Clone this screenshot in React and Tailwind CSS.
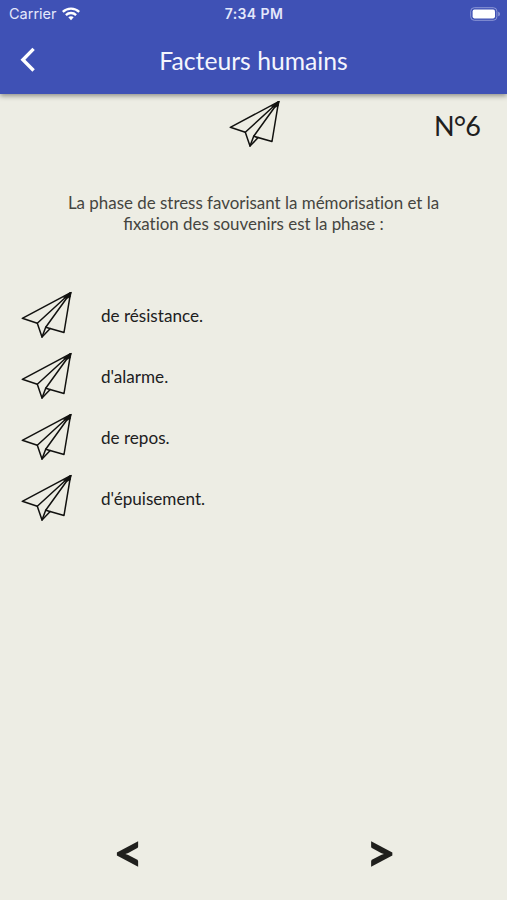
import React from 'react';

const question = {
    category: 'Facteurs humains',
    number: 6,
    text: 'La phase de stress favorisant la mémorisation et la fixation des souvenirs est la phase :',
    answers: ['de résistance.', "d'alarme.", 'de repos.', "d'épuisement."],
};

const PaperPlane = () => (
    <svg width="51" height="48" viewBox="0 0 51 48" fill="none" stroke="#11110f" strokeWidth="1.5" strokeLinejoin="round" strokeLinecap="round">
        <path d="M49.6 1.7 1.3 27.3 16.3 32.3 21 46 29.2 37.6" />
        <path d="M49.6 1.7 16.3 32.3" />
        <path d="M49.6 1.7 24.7 36.3 21 46" />
        <path d="M49.6 1.7 43 41.5 24.7 36.3" />
        <path d="M49.8 1.5 42.5 6.2 45.5 7.4 48.9 6.2Z" fill="#11110f" strokeWidth="0.8" />
    </svg>
);

const WifiIcon = () => (
    <svg width="18" height="14" viewBox="0 0 18 14" fill="none" stroke="#fff" strokeWidth="2.3">
        <path d="M0.8 4.9C5.3 0.5 12.7 0.5 17.2 4.9" />
        <path d="M3.9 8.1C6.7 5.3 11.3 5.3 14.1 8.1" />
        <path d="M6.3 10.3C7.8 8.9 10.2 8.9 11.7 10.3L9 13.2Z" fill="#fff" stroke="none" />
    </svg>
);

const BatteryIcon = () => (
    <svg width="31" height="14" viewBox="0 0 31 14">
        <rect x="0.7" y="0.7" width="26.2" height="12.6" rx="3.6" fill="none" stroke="#8c97d6" strokeWidth="1" />
        <rect x="2.6" y="2.6" width="22.4" height="8.8" rx="1.8" fill="#fff" />
        <path d="M28.2 4.7C30.6 5.4 30.6 8.6 28.2 9.3Z" fill="#8c97d6" />
    </svg>
);

const StatusBar = () => (
    <div className="grid h-[27px] grid-cols-3 items-center pl-[7px] pr-[6px] font-['Inter',sans-serif] text-[14px] text-[#e4e8fb]">
        <div className="flex items-center gap-[5px] pl-[2px]">
            <span className="text-[14.5px]">Carrier</span>
            <WifiIcon />
        </div>
        <span className="text-center font-semibold tracking-[0.4px]">7:34 PM</span>
        <div className="flex justify-end"><BatteryIcon /></div>
    </div>
);

// Only the "fi" pair is drawn as a ligature
const QuestionText = ({ text }) => (
    <p className="mx-auto mt-[44px] w-[400px] text-center text-[16.93px] leading-[21px] text-[#45453f] [font-variant-ligatures:none]">
        {text.split(/(fi)/).map((part, i) => (
            part === 'fi' ? <span key={i} className="[font-variant-ligatures:normal]">{part}</span> : part
        ))}
    </p>
);

const App = () => {
    return (
        <div className="flex h-[900px] w-[507px] flex-col overflow-hidden bg-[#edede4] font-['Lato',sans-serif] text-[#20201d]">
            <header className="h-[94px] shrink-0 bg-[#3f51b5] shadow-[0_2px_5px_rgba(0,0,0,0.4)]">
                <StatusBar />
                <div className="grid h-[66px] grid-cols-[60px_1fr_60px] items-center">
                    <button className="pl-[20px]" aria-label="Retour">
                        <svg width="16" height="26" viewBox="0 0 16 26" fill="none" stroke="#fff" strokeWidth="3.4">
                            <path d="M13.6 1.9 2.9 12.7 13.6 23.5" />
                        </svg>
                    </button>
                    <h1 className="pt-[2px] text-center text-[24.7px] text-[#f4f5fd]">{question.category}</h1>
                </div>
            </header>

            <main className="flex flex-1 flex-col">
                <div className="grid grid-cols-3 pt-[6px]">
                    <div className="col-start-2 flex justify-center pl-px"><PaperPlane /></div>
                    <span className="pr-[27px] pt-[8px] text-right text-[27px] leading-[36px] tracking-[-0.9px]">
                        N<span className="align-[-3px] text-[30px] leading-none">°</span>{question.number}
                    </span>
                </div>

                <QuestionText text={question.text} />

                <ul className="mt-[51px]">
                    {question.answers.map((answer) => (
                        <li key={answer} className="flex h-[61px] items-center pl-[21px]">
                            <div className="pb-[2px]"><PaperPlane /></div>
                            <span className="ml-[29px] text-[17.1px]">{answer}</span>
                        </li>
                    ))}
                </ul>

                <nav className="mb-px mt-auto grid h-[94px] grid-cols-2 pl-[2px] text-center text-[53px] font-black leading-[94px]">
                    <button>&lt;</button>
                    <button>&gt;</button>
                </nav>
            </main>
        </div>
    );
};

export default App;
